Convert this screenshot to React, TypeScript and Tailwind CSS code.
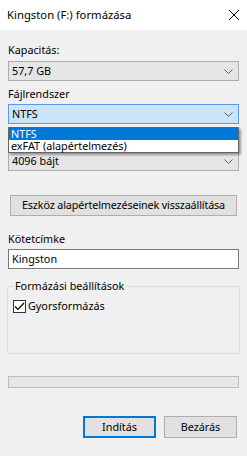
import React from "react";

const font = { fontFamily: '"Segoe UI", "Noto Sans", "Open Sans", sans-serif' };

function Chevron() {
  return (
    <svg width="9" height="5" viewBox="0 0 9 5" className="shrink-0">
      <path d="M0.5 0.5 L4.5 4.5 L8.5 0.5" fill="none" stroke="#606060" strokeWidth="1" />
    </svg>
  );
}

export default function App() {
  return (
    <div className="w-[247px] h-[456px] bg-[#f0f0f0] text-[10.8px] text-black flex flex-col whitespace-nowrap" style={font}>
      {/* title bar */}
      <div className="h-[30px] bg-white flex items-center justify-between pl-[7px] pr-[8px] shrink-0">
        <span className="text-[11.3px] leading-none">Kingston (F:) formázása</span>
        <svg width="10" height="10" viewBox="0 0 10 10">
          <path d="M0 0 L10 10 M10 0 L0 10" stroke="#000" strokeWidth="1" />
        </svg>
      </div>

      <div className="px-[8px] flex flex-col relative">
        <div className="mt-[12px] h-[16px] leading-[16px]">Kapacitás:</div>
        <div className="mt-[3px] h-[20px] bg-[#e5e5e5] border border-[#adadad] flex items-center justify-between pl-[3px] pr-[5px]">
          <span>57,7 GB</span>
          <Chevron />
        </div>

        <div className="mt-[5px] h-[16px] leading-[16px]">Fájlrendszer</div>
        <div className="mt-[2px] h-[20px] bg-[#cce4f7] border border-[#569de5] flex items-center justify-between pl-[3px] pr-[5px]">
          <span>NTFS</span>
          <Chevron />
        </div>

        {/* label of allocation size is hidden behind the open list */}
        <div className="mt-[9px] h-[16px]" />
        <div className="mt-[2px] h-[20px] bg-[#e5e5e5] border border-[#adadad] flex items-center justify-between pl-[3px] pr-[5px]">
          <span>4096 bájt</span>
          <Chevron />
        </div>

        {/* open dropdown list */}
        <div className="absolute left-[8px] top-[97px] w-[231px] bg-white border border-[#646464] shadow-[2px_2px_2px_rgba(0,0,0,0.35)] flex flex-col z-10">
          <div className="h-[12px] leading-[12px] bg-[#0078d7] text-white pl-[2px]">NTFS</div>
          <div className="h-[12px] leading-[12px] pl-[2px]">exFAT (alapértelmezés)</div>
        </div>

        <div className="mt-[24px] mx-[2px] h-[21px] bg-[#e1e1e1] border border-[#adadad] flex items-center justify-center tracking-[-0.15px]">
          Eszköz alapértelmezéseinek visszaállítása
        </div>

        <div className="mt-[15px] h-[16px] leading-[16px]">Kötetcímke</div>
        <div className="mt-[2px] h-[20px] bg-white border border-[#7a7a7a] flex items-center pl-[3px]">
          Kingston
        </div>

        {/* group box */}
        <div className="mt-[17px] mx-[-1px] h-[68px] border border-[#dcdcdc] rounded-[2px] relative pt-[11px] pl-[5px]">
          <span className="absolute left-[6px] top-[-9px] bg-[#f0f0f0] px-[1px] leading-[16px]">Formázási beállítások</span>
          <div className="flex items-center gap-[2px]">
            <div className="w-[13px] h-[13px] border border-[#333] bg-white flex items-center justify-center">
              <svg width="11" height="9" viewBox="0 0 11 9">
                <path d="M1 4.5 L4 7.5 L10 1" fill="none" stroke="#000" strokeWidth="1.2" />
              </svg>
            </div>
            <span className="leading-[16px]">Gyorsformázás</span>
          </div>
        </div>

        <div className="mt-[22px] h-[12px] bg-[#e6e6e6] border border-[#bcbcbc]" />

        <div className="mt-[28px] flex justify-end gap-[8px] pr-[2px]">
          <div className="w-[73px] h-[22px] bg-[#e1e1e1] border-2 border-[#0078d7] flex items-center justify-center">Indítás</div>
          <div className="w-[73px] h-[22px] bg-[#e1e1e1] border border-[#adadad] flex items-center justify-center">Bezárás</div>
        </div>
      </div>
    </div>
  );
}
